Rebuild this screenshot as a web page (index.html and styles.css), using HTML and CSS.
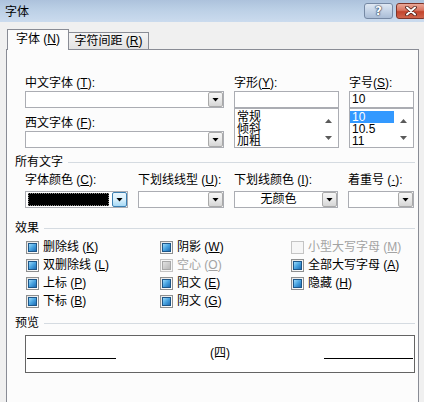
FILE: index.html
```html
<!DOCTYPE html>
<html lang="zh-CN">
<head>
<meta charset="utf-8">
<title>字体</title>
<link rel="stylesheet" href="styles.css">
</head>
<body>
<div class="titlebar">
  <span class="title">字体</span>
  <div class="caption-btns">
    <div class="cap-btn help">?</div>
    <div class="cap-btn close">
      <svg width="12" height="10" viewBox="0 0 12 10">
        <path d="M2 1.5 L10 8.5 M10 1.5 L2 8.5" stroke="#4a1d16" stroke-width="3.6" stroke-linecap="round"/>
        <path d="M2 1.5 L10 8.5 M10 1.5 L2 8.5" stroke="#ffffff" stroke-width="2" stroke-linecap="round"/>
      </svg>
    </div>
  </div>
</div>
<div class="client">
  <div class="tabs">
    <div class="tab active">字体 (<u>N</u>)</div>
    <div class="tab">字符间距 (<u>R</u>)</div>
  </div>
  <div class="panel">
    <div class="font-grid">
      <div class="col">
        <div class="lbl">中文字体 (<u>T</u>):</div>
        <div class="combo"><span class="combo-text"></span><span class="dd"></span></div>
        <div class="lbl gap">西文字体 (<u>F</u>):</div>
        <div class="combo"><span class="combo-text"></span><span class="dd"></span></div>
      </div>
      <div class="col">
        <div class="lbl">字形(<u>Y</u>):</div>
        <div class="textbox"></div>
        <div class="listbox">
          <div class="items">
            <div class="item">常规</div>
            <div class="item">倾斜</div>
            <div class="item">加粗</div>
          </div>
          <div class="vscroll"><span class="arrow up"></span><span class="arrow down"></span></div>
        </div>
      </div>
      <div class="col">
        <div class="lbl">字号(<u>S</u>):</div>
        <div class="textbox">10</div>
        <div class="listbox">
          <div class="items">
            <div class="item sel">10</div>
            <div class="item">10.5</div>
            <div class="item">11</div>
          </div>
          <div class="vscroll"><span class="arrow up"></span><span class="arrow down"></span></div>
        </div>
      </div>
    </div>

    <div class="group-head first">所有文字</div>
    <div class="color-grid">
      <div class="col">
        <div class="lbl">字体颜色 (<u>C</u>):</div>
        <div class="combo"><span class="swatch"></span><span class="dd focus"></span></div>
      </div>
      <div class="col">
        <div class="lbl">下划线线型 (<u>U</u>):</div>
        <div class="combo"><span class="combo-text"></span><span class="dd"></span></div>
      </div>
      <div class="col">
        <div class="lbl">下划线颜色 (<u>I</u>):</div>
        <div class="combo"><span class="combo-text center">无颜色</span><span class="dd"></span></div>
      </div>
      <div class="col">
        <div class="lbl">着重号 (<u>·</u>):</div>
        <div class="combo"><span class="combo-text"></span><span class="dd"></span></div>
      </div>
    </div>

    <div class="group-head effects">效果</div>
    <div class="effects-grid">
      <div class="cb"><span class="box mixed"></span><span class="cb-text">删除线 (<u>K</u>)</span></div>
      <div class="cb"><span class="box mixed"></span><span class="cb-text">双删除线 (<u>L</u>)</span></div>
      <div class="cb"><span class="box mixed"></span><span class="cb-text">上标 (<u>P</u>)</span></div>
      <div class="cb"><span class="box mixed"></span><span class="cb-text">下标 (<u>B</u>)</span></div>
      <div class="cb"><span class="box mixed"></span><span class="cb-text">阴影 (<u>W</u>)</span></div>
      <div class="cb disabled"><span class="box mixed"></span><span class="cb-text">空心 (<u>O</u>)</span></div>
      <div class="cb"><span class="box mixed"></span><span class="cb-text">阳文 (<u>E</u>)</span></div>
      <div class="cb"><span class="box mixed"></span><span class="cb-text">阴文 (<u>G</u>)</span></div>
      <div class="cb disabled"><span class="box"></span><span class="cb-text">小型大写字母 (<u>M</u>)</span></div>
      <div class="cb"><span class="box mixed"></span><span class="cb-text">全部大写字母 (<u>A</u>)</span></div>
      <div class="cb"><span class="box mixed"></span><span class="cb-text">隐藏 (<u>H</u>)</span></div>
    </div>

    <div class="group-head preview-head">预览</div>
    <div class="preview">
      <span class="pline"></span>
      <span class="ptext">(四)</span>
      <span class="pline"></span>
    </div>
  </div>
</div>
</body>
</html>
```

FILE: styles.css
```css
html, body {
  margin: 0;
  padding: 0;
}

body {
  width: 424px;
  height: 402px;
  overflow: hidden;
  background: #f0f0f0;
  font-family: "Liberation Sans", "Noto Sans CJK SC", sans-serif;
  font-size: 12px;
  color: #000;
}

u {
  text-decoration: underline;
  text-underline-offset: 1px;
}

/* ---------- title bar ---------- */
.titlebar {
  height: 22px;
  display: flex;
  justify-content: space-between;
  align-items: flex-start;
  background: linear-gradient(#adc2dc 0%, #bcd0e6 45%, #cbdbee 100%);
}

.title {
  margin-top: 2px;
  padding-left: 5px;
  line-height: 20px;
}

.caption-btns {
  display: flex;
  gap: 3px;
  margin-top: 3px;
  margin-right: -2px;
}

.cap-btn {
  height: 16px;
  box-sizing: border-box;
  border-radius: 3px;
  display: flex;
  align-items: center;
  justify-content: center;
}

.cap-btn.help {
  width: 29px;
  border: 1px solid #7689a4;
  background: linear-gradient(#dfe8f3 0%, #c4d3e6 50%, #aabdd6 100%);
  color: #fff;
  font-family: "DejaVu Sans", sans-serif;
  font-weight: bold;
  font-size: 12px;
  line-height: 14px;
  text-shadow: 0 0 1px #2d3d57, 0 0 1px #2d3d57, 0 0 2px #2d3d57;
}

.cap-btn.close {
  width: 30px;
  border: 1px solid #7e3428;
  background: linear-gradient(#eaa898 0%, #d87460 45%, #c2442d 55%, #d0654c 100%);
}

/* ---------- tabs ---------- */
.client {
  padding: 7px 0 0 6px;
}

.tabs {
  display: flex;
  align-items: flex-end;
  height: 21px;
  margin-left: 1px;
  margin-bottom: -1px;
}

.tab {
  box-sizing: border-box;
  height: 17px;
  width: 81px;
  margin-left: -1px;
  margin-bottom: 1px;
  border: 1px solid #898c95;
  border-bottom: none;
  background: linear-gradient(#f4f4f4, #e2e2e2);
  text-align: center;
  line-height: 16px;
  white-space: nowrap;
}

.tab.active {
  position: relative;
  z-index: 1;
  height: 21px;
  width: 62px;
  margin-left: 0;
  margin-bottom: 0;
  background: #fcfcfc;
  line-height: 19px;
}

.panel {
  box-sizing: border-box;
  width: 413px;
  height: 360px;
  border: 1px solid #898c95;
  background: #fcfcfc;
  padding: 25px 3px 0 18px;
}

/* ---------- labels & controls ---------- */
.lbl {
  height: 16px;
  line-height: 16px;
  white-space: nowrap;
}

.lbl.gap {
  margin-top: 7px;
}

.font-grid {
  display: grid;
  grid-template-columns: 199px 105px 65px;
  column-gap: 10px;
}

.combo {
  box-sizing: border-box;
  height: 17px;
  border: 1px solid #abadb3;
  background: #fff;
  display: flex;
}

.combo-text {
  flex: 1;
  line-height: 15px;
  white-space: nowrap;
}

.combo-text.center {
  text-align: center;
}

.dd {
  box-sizing: border-box;
  flex: none;
  width: 15px;
  height: 15px;
  margin-left: auto;
  border: 1px solid #a9a9a9;
  border-radius: 2px;
  background: linear-gradient(#f6f6f6 0%, #e9e9e9 50%, #d6d6d6 100%);
  display: flex;
  align-items: center;
  justify-content: center;
}

.dd::before {
  content: "";
  width: 7px;
  height: 4px;
  background: #000;
  clip-path: polygon(0 0, 100% 0, 50% 100%);
}

.dd.focus {
  border-color: #3c7fb1;
  background: linear-gradient(#eaf6fd 0%, #d9f0fc 50%, #a7d9f5 100%);
}

.swatch {
  flex: 1;
  box-sizing: border-box;
  margin: 1px 3px 1px 2px;
  background: #000;
  border: 1px dotted #8a8a8a;
}

.textbox {
  box-sizing: border-box;
  height: 17px;
  border: 1px solid #abadb3;
  background: #fff;
  padding-left: 2px;
  line-height: 15px;
}

.listbox {
  box-sizing: border-box;
  height: 40px;
  border: 1px solid #abadb3;
  background: #fff;
  display: flex;
  overflow: hidden;
}

.items {
  flex: 1;
  padding-top: 2px;
}

.item {
  height: 12px;
  line-height: 12px;
  padding-left: 2px;
  white-space: nowrap;
}

.item.sel {
  background: #3399ff;
  color: #fff;
}

.vscroll {
  width: 19px;
  display: flex;
  flex-direction: column;
  align-items: center;
  padding-top: 10px;
}

.arrow {
  width: 7px;
  height: 4px;
  background: #5a5a5a;
}

.arrow.up {
  clip-path: polygon(50% 0, 100% 100%, 0 100%);
}

.arrow.down {
  margin-top: 13px;
  clip-path: polygon(0 0, 100% 0, 50% 100%);
}

/* ---------- group headers ---------- */
.group-head {
  display: flex;
  align-items: center;
  gap: 5px;
  height: 14px;
  line-height: 14px;
  margin-left: -10px;
  white-space: nowrap;
}

.group-head::after {
  content: "";
  flex: 1;
  height: 1px;
  background: #d5dbe1;
}

.group-head.first {
  margin-top: 7px;
}

.group-head.effects {
  margin-top: 13px;
}

.group-head.preview-head {
  margin-top: 6px;
}

.color-grid {
  display: grid;
  grid-template-columns: 103px 86px 104px 66px;
  column-gap: 10px;
  margin-top: 3px;
}

.color-grid .lbl {
  margin-bottom: 3px;
}

/* ---------- effects ---------- */
.effects-grid {
  display: grid;
  grid-template-columns: 134px 131px 1fr;
  grid-template-rows: repeat(4, 18px);
  grid-auto-flow: column;
  margin-top: 3px;
  margin-left: 1px;
}

.cb {
  display: flex;
  align-items: center;
  gap: 4px;
  white-space: nowrap;
}

.cb-text {
  line-height: 16px;
}

.box {
  flex: none;
  box-sizing: border-box;
  width: 13px;
  height: 13px;
  border: 1px solid #8e8f8f;
  background: linear-gradient(135deg, #e6e6e6, #ffffff);
  padding: 1px;
}

.box.mixed::before {
  content: "";
  display: block;
  box-sizing: border-box;
  width: 9px;
  height: 9px;
  border: 1px solid #1d5688;
  background: linear-gradient(135deg, #9ad9fa 0%, #48a3e0 50%, #1f6db4 100%);
}

.cb.disabled {
  color: #a3a3a3;
}

.cb.disabled .box {
  border-color: #c4c4c4;
  background: #f6f6f6;
}

.cb.disabled .box.mixed::before {
  border-color: #a8a8a8;
  background: linear-gradient(135deg, #e2e2e2, #b8b8b8);
}

/* ---------- preview ---------- */
.preview {
  box-sizing: border-box;
  height: 38px;
  margin-top: 5px;
  border: 1px solid #646464;
  background: #fff;
  display: flex;
  justify-content: space-between;
  align-items: flex-start;
  padding: 0 1px;
}

.pline {
  width: 89px;
  height: 1px;
  margin-top: 22px;
  background: #000;
}

.ptext {
  line-height: 14px;
  margin-top: 10px;
}
```
